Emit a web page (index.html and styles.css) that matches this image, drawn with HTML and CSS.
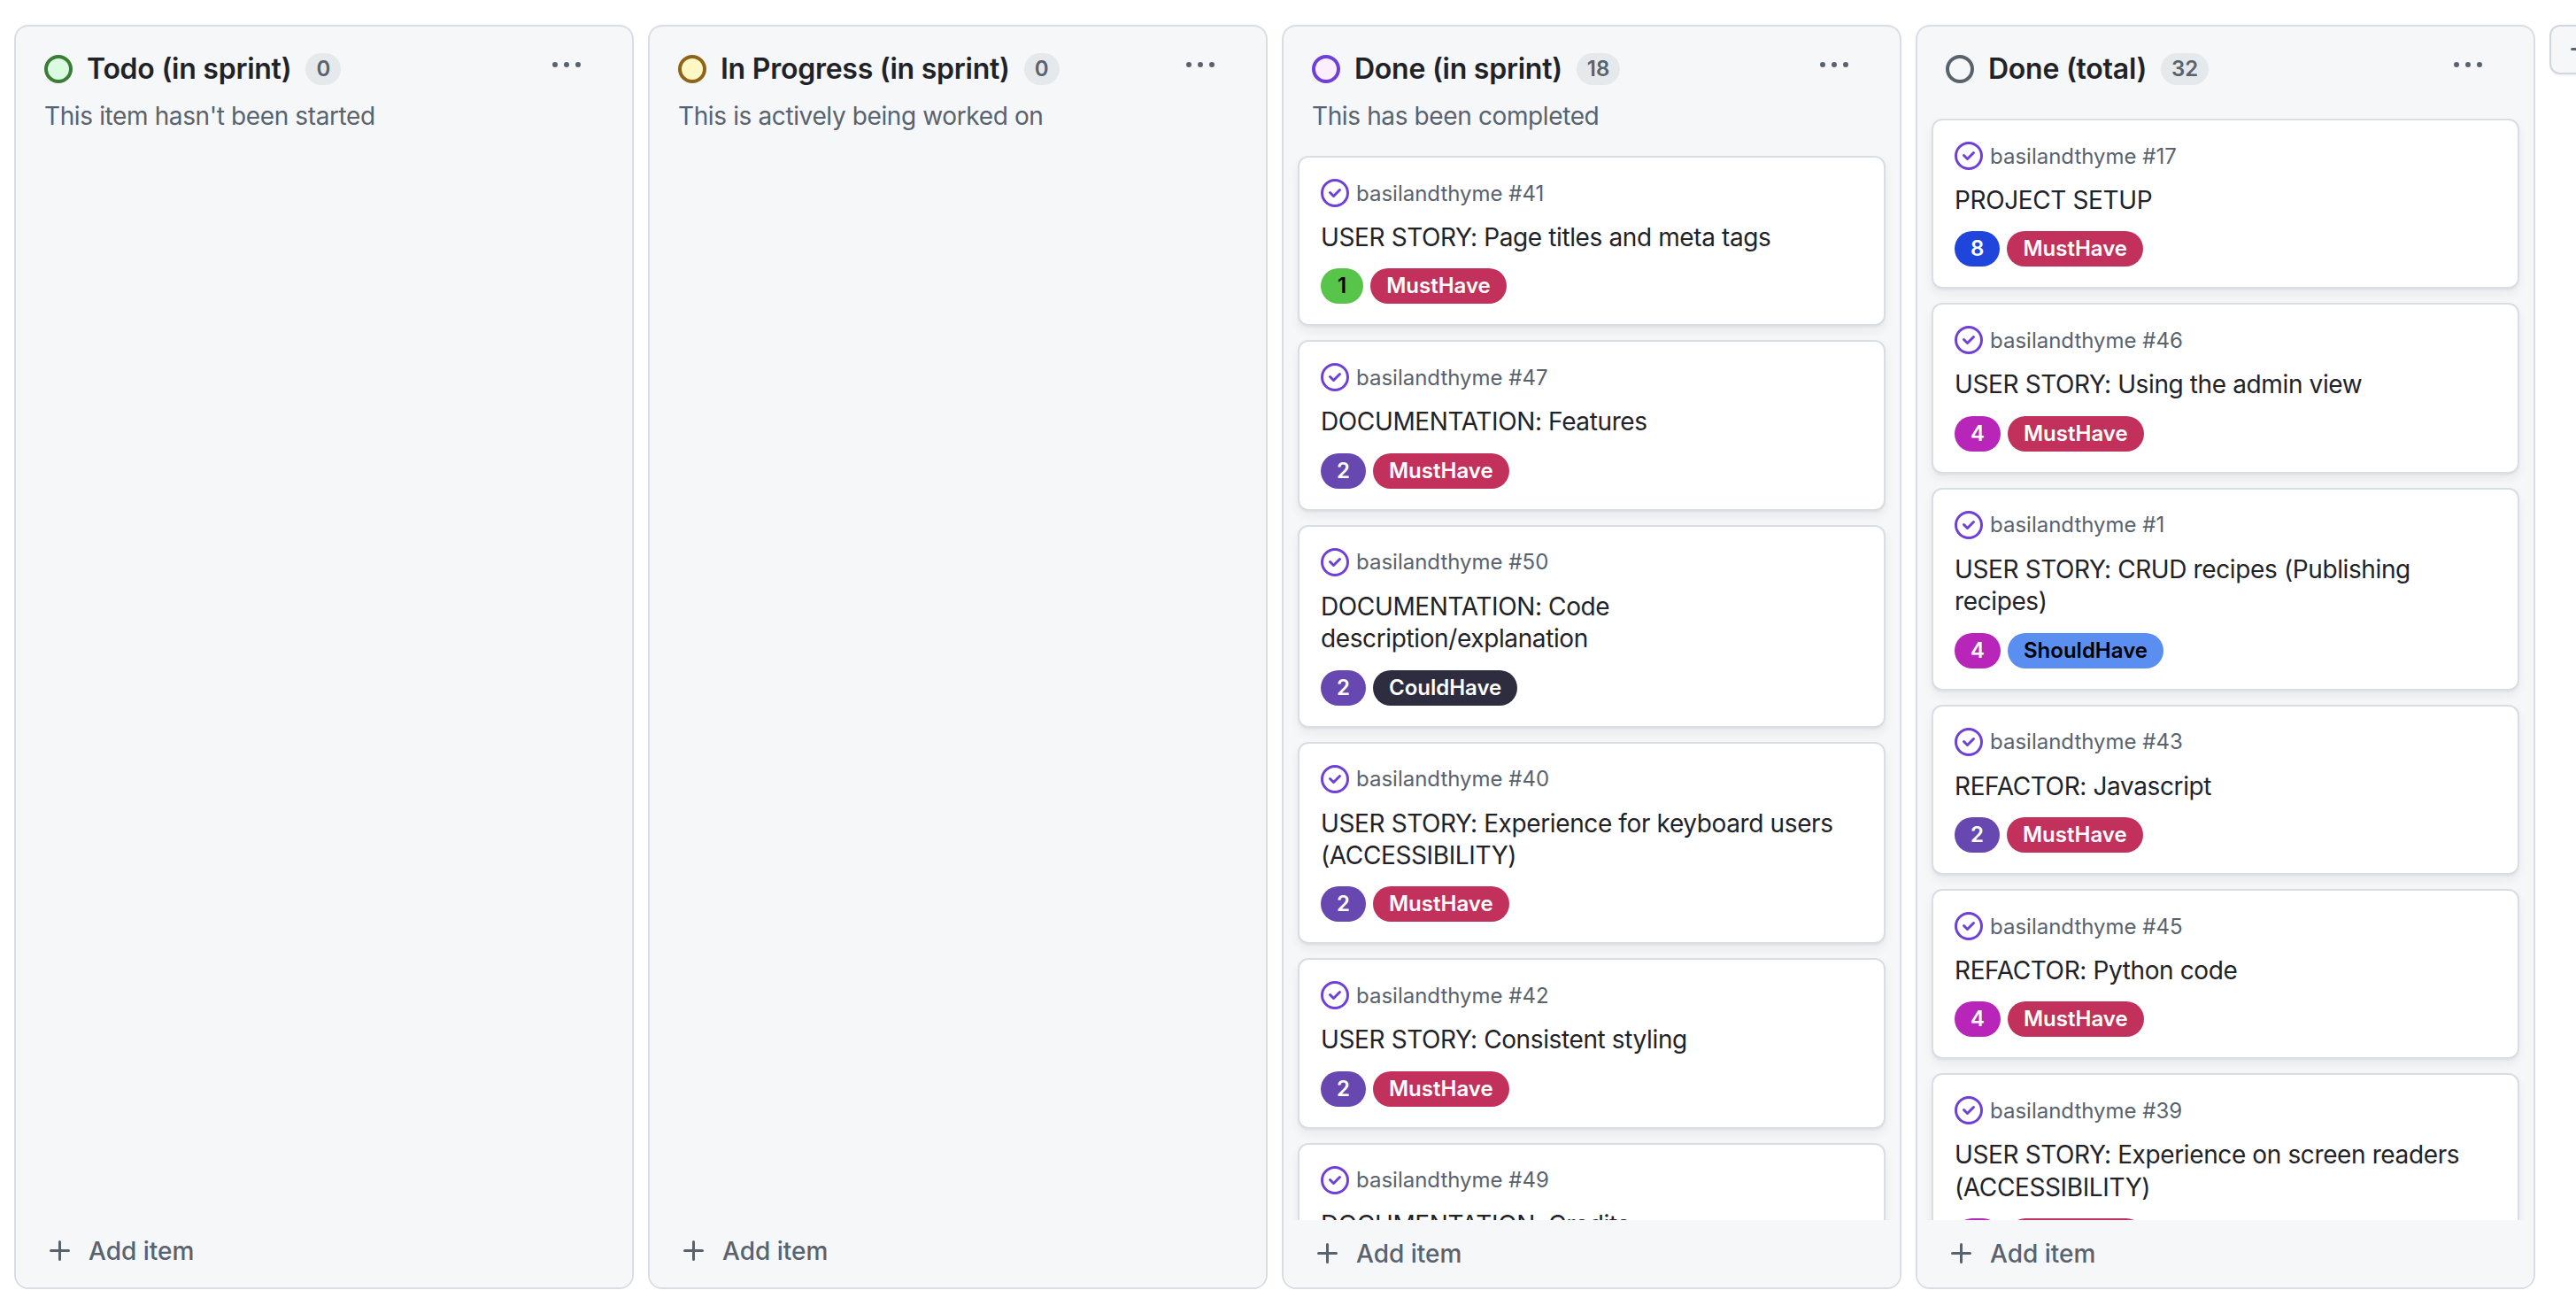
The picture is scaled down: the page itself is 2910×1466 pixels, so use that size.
FILE: index.html
```html
<!DOCTYPE html>
<html lang="en">
<head>
<meta charset="utf-8">
<title>Project board</title>
<link rel="stylesheet" href="styles.css">
</head>
<body>
<svg class="defs" width="0" height="0" aria-hidden="true">
  <symbol id="kebab" viewBox="0 0 16 16"><path d="M8 9a1.5 1.5 0 1 0 0-3 1.5 1.5 0 0 0 0 3ZM1.5 9a1.5 1.5 0 1 0 0-3 1.5 1.5 0 0 0 0 3Zm13 0a1.5 1.5 0 1 0 0-3 1.5 1.5 0 0 0 0 3Z"/></symbol>
  <symbol id="plus" viewBox="0 0 16 16"><path d="M7.75 2a.75.75 0 0 1 .75.75V7h4.25a.75.75 0 0 1 0 1.5H8.5v4.25a.75.75 0 0 1-1.5 0V8.5H2.75a.75.75 0 0 1 0-1.5H7V2.75A.75.75 0 0 1 7.75 2Z"/></symbol>
  <symbol id="done" viewBox="0 0 16 16"><path d="M11.28 6.78a.75.75 0 0 0-1.06-1.06L7.25 8.69 5.78 7.22a.75.75 0 0 0-1.06 1.06l2 2a.75.75 0 0 0 1.06 0l3.5-3.5Z"/><path d="M16 8A8 8 0 1 1 0 8a8 8 0 0 1 16 0Zm-1.5 0a6.5 6.5 0 1 0-13 0 6.5 6.5 0 0 0 13 0Z"/></symbol>
</svg>
<main class="board">
  <section class="column column-empty">
    <header class="col-head">
      <div class="col-title"><span class="status status-green"></span><h2 class="col-name">Todo (in sprint)</h2><span class="count">0</span><svg class="kebab"><use href="#kebab"/></svg></div>
      <p class="col-desc">This item hasn't been started</p>
    </header>
    <div class="cards"></div>
    <footer class="add"><svg class="plus"><use href="#plus"/></svg><span>Add item</span></footer>
  </section>
  <section class="column column-empty">
    <header class="col-head">
      <div class="col-title"><span class="status status-yellow"></span><h2 class="col-name">In Progress (in sprint)</h2><span class="count">0</span><svg class="kebab"><use href="#kebab"/></svg></div>
      <p class="col-desc">This is actively being worked on</p>
    </header>
    <div class="cards"></div>
    <footer class="add"><svg class="plus"><use href="#plus"/></svg><span>Add item</span></footer>
  </section>
  <section class="column">
    <header class="col-head">
      <div class="col-title"><span class="status status-purple"></span><h2 class="col-name">Done (in sprint)</h2><span class="count">18</span><svg class="kebab"><use href="#kebab"/></svg></div>
      <p class="col-desc">This has been completed</p>
    </header>
    <div class="cards">
      <article class="card"><div class="meta"><svg class="done"><use href="#done"/></svg><span>basilandthyme #41</span></div><h3 class="title">USER STORY: Page titles and meta tags</h3><div class="labels"><span class="label l1">1</span><span class="label must">MustHave</span></div></article>
      <article class="card"><div class="meta"><svg class="done"><use href="#done"/></svg><span>basilandthyme #47</span></div><h3 class="title">DOCUMENTATION: Features</h3><div class="labels"><span class="label l2">2</span><span class="label must">MustHave</span></div></article>
      <article class="card"><div class="meta"><svg class="done"><use href="#done"/></svg><span>basilandthyme #50</span></div><h3 class="title">DOCUMENTATION: Code description/explanation</h3><div class="labels"><span class="label l2">2</span><span class="label could">CouldHave</span></div></article>
      <article class="card"><div class="meta"><svg class="done"><use href="#done"/></svg><span>basilandthyme #40</span></div><h3 class="title">USER STORY: Experience for keyboard users (ACCESSIBILITY)</h3><div class="labels"><span class="label l2">2</span><span class="label must">MustHave</span></div></article>
      <article class="card"><div class="meta"><svg class="done"><use href="#done"/></svg><span>basilandthyme #42</span></div><h3 class="title">USER STORY: Consistent styling</h3><div class="labels"><span class="label l2">2</span><span class="label must">MustHave</span></div></article>
      <article class="card"><div class="meta"><svg class="done"><use href="#done"/></svg><span>basilandthyme #49</span></div><h3 class="title">DOCUMENTATION: Credits</h3><div class="labels"><span class="label l1">1</span><span class="label must">MustHave</span></div></article>
    </div>
    <footer class="add"><svg class="plus"><use href="#plus"/></svg><span>Add item</span></footer>
  </section>
  <section class="column">
    <header class="col-head">
      <div class="col-title"><span class="status status-gray"></span><h2 class="col-name">Done (total)</h2><span class="count">32</span><svg class="kebab"><use href="#kebab"/></svg></div>
    </header>
    <div class="cards">
      <article class="card"><div class="meta"><svg class="done"><use href="#done"/></svg><span>basilandthyme #17</span></div><h3 class="title">PROJECT SETUP</h3><div class="labels"><span class="label l8">8</span><span class="label must">MustHave</span></div></article>
      <article class="card"><div class="meta"><svg class="done"><use href="#done"/></svg><span>basilandthyme #46</span></div><h3 class="title">USER STORY: Using the admin view</h3><div class="labels"><span class="label l4">4</span><span class="label must">MustHave</span></div></article>
      <article class="card"><div class="meta"><svg class="done"><use href="#done"/></svg><span>basilandthyme #1</span></div><h3 class="title">USER STORY: CRUD recipes (Publishing recipes)</h3><div class="labels"><span class="label l4">4</span><span class="label should">ShouldHave</span></div></article>
      <article class="card"><div class="meta"><svg class="done"><use href="#done"/></svg><span>basilandthyme #43</span></div><h3 class="title">REFACTOR: Javascript</h3><div class="labels"><span class="label l2">2</span><span class="label must">MustHave</span></div></article>
      <article class="card"><div class="meta"><svg class="done"><use href="#done"/></svg><span>basilandthyme #45</span></div><h3 class="title">REFACTOR: Python code</h3><div class="labels"><span class="label l4">4</span><span class="label must">MustHave</span></div></article>
      <article class="card"><div class="meta"><svg class="done"><use href="#done"/></svg><span>basilandthyme #39</span></div><h3 class="title">USER STORY: Experience on screen readers (ACCESSIBILITY)</h3><div class="labels"><span class="label l4">4</span><span class="label must">MustHave</span></div></article>
    </div>
    <footer class="add"><svg class="plus"><use href="#plus"/></svg><span>Add item</span></footer>
  </section>
  <div class="new-col"><svg class="plus"><use href="#plus"/></svg></div>
</main>
</body>
</html>
```
FILE: styles.css
```css
* { box-sizing: border-box; }
html, body { margin: 0; height: 100%; overflow: hidden; background: #fff; }
body { font-family: Inter, "Liberation Sans", sans-serif; color: #1f2328; }
.defs { position: absolute; }
.board { display: flex; gap: 16px; height: 1456px; padding: 28px 0 0 16px; }
.column { flex: 0 0 700px; display: flex; flex-direction: column; min-height: 0; background: #f6f7f9; border: 2px solid #d8dee4; border-radius: 16px; overflow: hidden; }
.col-head { padding: 30px 32px 27px; flex: none; }
.col-title { display: flex; align-items: center; height: 36px; margin-bottom: 11px; }
.status { width: 32px; height: 32px; border-radius: 50%; border: 4px solid; flex: none; }
.status-green { border-color: #3a7d34; background: #dafbe1; }
.status-yellow { border-color: #8f6419; background: #fff8c5; }
.status-purple { border-color: #6e40d8; background: #fbefff; }
.status-gray { border-color: #59636e; background: #f6f7f9; }
.col-name { margin: 0 0 0 16px; font-size: 32px; font-weight: 600; line-height: 36px; letter-spacing: -0.25px; white-space: nowrap; }
.count { margin-left: 16px; min-width: 40px; height: 36px; padding: 0 12px; border-radius: 18px; background: #e6e9ec; color: #59636e; font-size: 24px; font-weight: 600; line-height: 36px; text-align: center; }
.kebab { width: 32px; height: 32px; margin-left: auto; margin-right: 26px; margin-top: -8px; fill: #59636e; }
.col-desc { margin: 17px 0 0; font-size: 28px; line-height: 36px; letter-spacing: -0.38px; color: #59636e; }
.cards { flex: 1; min-height: 0; overflow: hidden; display: flex; flex-direction: column; gap: 16px; padding: 0 16px; }
.card { flex: none; background: #fff; border: 2px solid #d8dee4; border-radius: 12px; padding: 24px 24px 23px; box-shadow: 0 2px 2px rgba(31,35,40,.04), 0 6px 12px rgba(31,35,40,.06); }
.meta { display: flex; align-items: center; gap: 8px; height: 32px; font-size: 24px; color: #59636e; }
.done { width: 32px; height: 32px; fill: #6e40d8; flex: none; }
.title { margin: 16px 0 17px; font-size: 28px; font-weight: 400; line-height: 36.4px; letter-spacing: -0.38px; }
.labels { display: flex; gap: 8px; }
.label { height: 40px; padding: 0 18px; border-radius: 20px; font-size: 24px; font-weight: 600; line-height: 40px; color: #fff; }
.l1 { padding: 0 19px; background: #57c44a; color: #000; }
.l2 { background: #6748b1; }
.l4 { background: #b825b9; }
.l8 { background: #1f45dc; }
.must { background: #c1315b; }
.could { background: #2e2d40; }
.should { background: #5a8ef0; color: #000; }
.add { flex: none; height: 76px; display: flex; align-items: center; gap: 16px; padding: 0 0 0 34px; font-size: 28px; font-weight: 500; color: #59636e; background: #f6f7f9; position: relative; }
.column-empty .add { padding-bottom: 6px; }
.plus { width: 32px; height: 32px; fill: #59636e; flex: none; }
.new-col { flex: 0 0 72px; height: 56px; border: 2px solid #d0d7de; border-radius: 12px; background: #f6f7f9; display: flex; align-items: center; justify-content: center; box-shadow: 0 2px 2px rgba(31,35,40,.05); }
```
